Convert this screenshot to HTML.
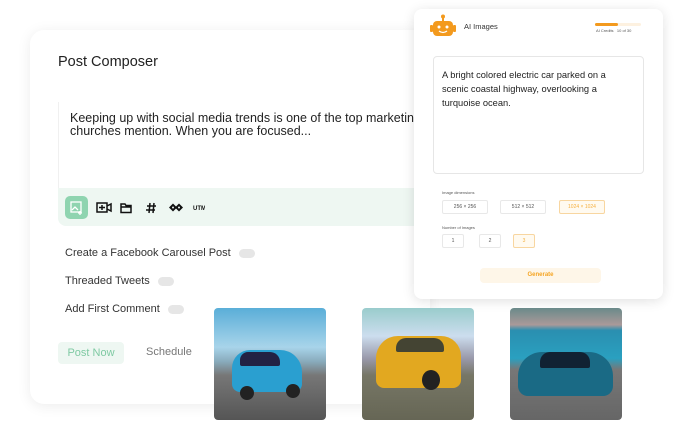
<!DOCTYPE html>
<html><head><style>
*{box-sizing:border-box;margin:0;padding:0}
body{width:674px;height:434px;background:#fff;position:relative;overflow:hidden;font-family:"Liberation Sans",sans-serif;color:#222}
.card{position:absolute;left:30px;top:30px;width:400px;height:374px;background:#fff;border-radius:14px;box-shadow:0 2px 14px rgba(0,0,0,.08)}
.abs{position:absolute}
.ai{position:absolute;left:414px;top:9px;width:249px;height:290px;background:#fff;border-radius:8px;box-shadow:0 2px 12px rgba(0,0,0,.12)}
.tog{display:inline-block;width:16px;height:9px;border-radius:5px;background:#e6e6e6;vertical-align:middle;margin-left:8px}
.btn{position:absolute;border:1px solid #e8e8e8;border-radius:2px;font-size:5px;color:#555;text-align:center;line-height:12px;height:14px}
.img{position:absolute;top:308px;width:112px;height:112px;border-radius:4px;overflow:hidden}
</style></head><body>
<div class="card">
 <div class="abs" style="left:28px;top:24px;font-size:14.5px;color:#222">Post Composer</div>
 <div class="abs" style="left:28px;top:72px;width:372px;height:86px;background:#fff;border-left:1px solid #f0f0f0"></div>
 <div class="abs" style="left:40px;top:82px;font-size:12.5px;line-height:13px;color:#222;white-space:nowrap;width:360px;overflow:hidden">Keeping up with social media trends is one of the top marketing<br>churches mention. When you are focused...</div>
 <div class="abs" style="left:28px;top:158px;width:372px;height:38px;background:#eef7f2;border-bottom-left-radius:8px"></div>
 <div class="abs" style="left:35px;top:166px;width:23px;height:23px;background:#8fd4b0;border-radius:5px"></div>
 <svg class="abs" style="left:35px;top:166px" width="140" height="23" viewBox="0 0 140 23">
  <g fill="none" stroke="#fff" stroke-width="1.3"><rect x="6" y="6" width="10" height="10"/><path d="M7 14l3-3 3 3M15 15v4M13 17h4"/></g>
  <g fill="none" stroke="#111" stroke-width="1.5"><rect x="32" y="7" width="10" height="9"/><path d="M34 11.5h6M37 9v5M42 10l4-2v7l-4-2"/>
  <path d="M56 8h4l1 1.5h5v7h-10z M56 11h10"/>
  <path d="M85 7l-1 10M89 7l-1 10M82 10h9M81 14h9"/></g>
  <g fill="#111"><path d="M104 11.5l4-4 4 4-4 4z M110 11.5l4-4 4 4-4 4z"/><circle cx="108" cy="11.5" r="1" fill="#eef7f2"/><circle cx="114" cy="11.5" r="1" fill="#eef7f2"/></g>
  <text x="128" y="14" font-size="6" font-weight="bold" fill="#111" font-family="Liberation Sans">UTM</text>
 </svg>
 <div class="abs" style="left:35px;top:217px;font-size:11px;color:#333">Create a Facebook Carousel Post<span class="tog"></span></div>
 <div class="abs" style="left:35px;top:245px;font-size:11px;color:#333">Threaded Tweets<span class="tog"></span></div>
 <div class="abs" style="left:35px;top:273px;font-size:11px;color:#333">Add First Comment<span class="tog"></span></div>
 <div class="abs" style="left:28px;top:312px;width:66px;height:22px;background:#eef7f2;border-radius:4px;color:#7fcaa3;font-size:11px;text-align:center;line-height:22px">Post Now</div>
 <div class="abs" style="left:116px;top:316px;font-size:11px;color:#777">Schedule</div>
</div>
<div class="ai">
 <svg class="abs" style="left:15px;top:5px" width="28" height="24" viewBox="0 0 28 24"><circle cx="14" cy="2.5" r="2" fill="#f39a1e"/><rect x="13" y="3" width="2" height="4" fill="#f39a1e"/><rect x="4" y="7" width="20" height="15" rx="4" fill="#f39a1e"/><rect x="1" y="11" width="3" height="7" rx="1" fill="#f39a1e"/><rect x="24" y="11" width="3" height="7" rx="1" fill="#f39a1e"/><circle cx="10" cy="13" r="1.5" fill="#fff"/><circle cx="18" cy="13" r="1.5" fill="#fff"/><path d="M10 17q4 3 8 0" stroke="#fff" stroke-width="1.2" fill="none"/></svg>
 <div class="abs" style="left:50px;top:13px;font-size:7.5px;color:#333">AI Images</div>
 <div class="abs" style="left:181px;top:14px;width:46px;height:3px;background:#fdf1e0;border-radius:2px"><div style="width:23px;height:3px;background:#f39a1e;border-radius:2px"></div></div>
 <div class="abs" style="left:182px;top:19px;font-size:4px;color:#555">AI Credits &nbsp; 10 of 30</div>
 <div class="abs" style="left:19px;top:47px;width:211px;height:118px;border:1px solid #e6e6e6;border-radius:4px"></div>
 <div class="abs" style="left:28px;top:59px;width:186px;font-size:9.3px;line-height:14px;color:#222">A bright colored electric car parked on a scenic coastal highway, overlooking a turquoise ocean.</div>
 <div class="abs" style="left:28px;top:181px;font-size:4px;color:#555">Image dimensions</div>
 <div class="btn" style="left:28px;top:191px;width:46px">256 × 256</div>
 <div class="btn" style="left:86px;top:191px;width:46px">512 × 512</div>
 <div class="btn" style="left:145px;top:191px;width:46px;border-color:#f8d6a0;color:#f5b040;background:#fffaf0">1024 × 1024</div>
 <div class="abs" style="left:28px;top:216px;font-size:4px;color:#555">Number of Images</div>
 <div class="btn" style="left:28px;top:225px;width:22px">1</div>
 <div class="btn" style="left:65px;top:225px;width:22px">2</div>
 <div class="btn" style="left:99px;top:225px;width:22px;border-color:#f8d6a0;color:#f5b040;background:#fffaf0">3</div>
 <div class="abs" style="left:66px;top:259px;width:121px;height:15px;background:#fef6e8;border-radius:4px;color:#f5a524;font-size:6px;font-weight:bold;text-align:center;line-height:15px">Generate</div>
</div>
<div class="img" style="left:214px;background:linear-gradient(180deg,#5aaed8 0%,#a8d4ea 35%,#8ab 48%,#777 60%,#555 100%)">
 <div class="abs" style="left:18px;top:42px;width:70px;height:42px;background:#2a9fd0;border-radius:18px 22px 8px 8px"></div>
 <div class="abs" style="left:26px;top:44px;width:40px;height:14px;background:#224;border-radius:8px 10px 2px 2px"></div>
 <div class="abs" style="left:26px;top:78px;width:14px;height:14px;background:#222;border-radius:50%"></div>
 <div class="abs" style="left:72px;top:76px;width:14px;height:14px;background:#222;border-radius:50%"></div>
</div>
<div class="img" style="left:362px;background:linear-gradient(180deg,#9cc 0%,#cde 25%,#99a 45%,#776 60%,#665 100%)">
 <div class="abs" style="left:14px;top:28px;width:85px;height:52px;background:#e2a820;border-radius:22px 20px 8px 8px"></div>
 <div class="abs" style="left:34px;top:30px;width:48px;height:14px;background:#443;border-radius:10px 10px 2px 2px"></div>
 <div class="abs" style="left:60px;top:62px;width:18px;height:20px;background:#222;border-radius:50%"></div>
</div>
<div class="img" style="left:510px;background:linear-gradient(180deg,#6a8a8a 0%,#a99 15%,#2a8fb0 20%,#2aa0c0 45%,#777 55%,#666 100%)">
 <div class="abs" style="left:8px;top:44px;width:95px;height:44px;background:#1a6a85;border-radius:24px 24px 10px 10px"></div>
 <div class="abs" style="left:30px;top:44px;width:50px;height:16px;background:#123;border-radius:10px 10px 2px 2px"></div>
</div>
</body></html>
